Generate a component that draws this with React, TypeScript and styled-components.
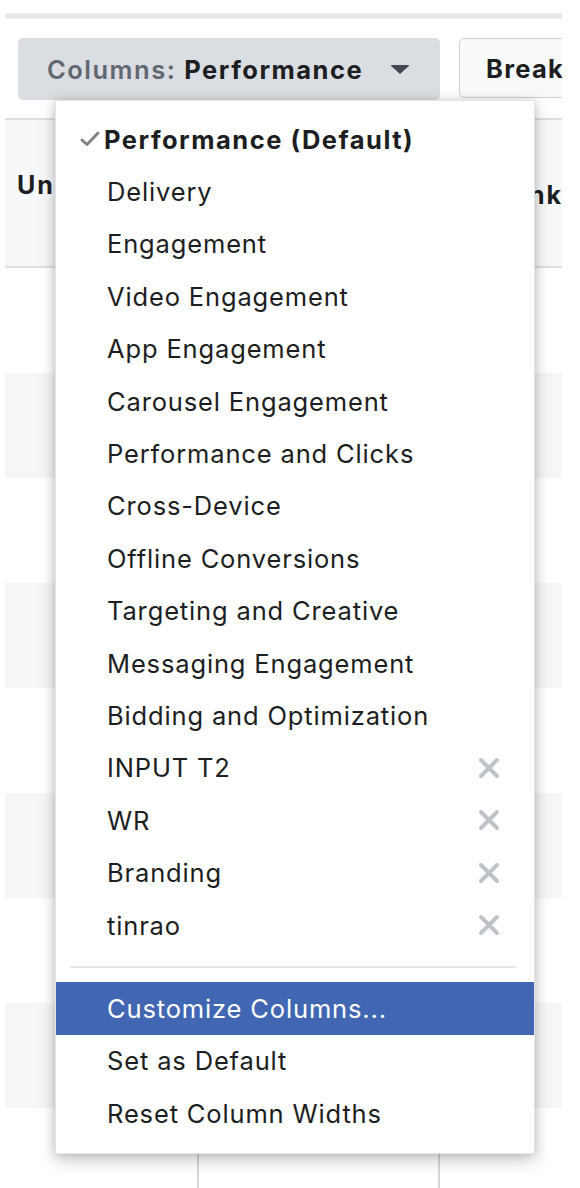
import styled, {createGlobalStyle} from "styled-components";

const GlobalStyle = createGlobalStyle`
  html, body {
    margin: 0;
    padding: 0;
    background: #ffffff;
  }
  body {
    font-family: Inter, "Open Sans", "Liberation Sans", sans-serif;
    color: #1c1e21;
    -webkit-font-smoothing: antialiased;
  }
`;

const Page = styled.div`
  position: relative;
  width: 580px;
  height: 1188px;
  overflow: hidden;
`;

const Viewport = styled.div`
  width: 562px;
  overflow: hidden;
`;

const TopRule = styled.div`
  margin: 13px 0 0 5px;
  height: 6px;
  background: linear-gradient(#eceef1, #e2e4e8 70%, #f4f5f7);
`;

const Toolbar = styled.div`
  display: flex;
  gap: 19px;
  margin-top: 19px;
  padding-left: 18px;
`;

const ColumnsButton = styled.div`
  display: flex;
  align-items: center;
  flex-shrink: 0;
  box-sizing: border-box;
  width: 422px;
  height: 62px;
  padding: 0 30px 0 29px;
  border-radius: 5px;
  background: #dadde1;
  font-size: 25.5px;
  letter-spacing: 1.5px;
`;

const Muted = styled.span`
  color: #606770;
  font-weight: 600;
  margin-right: 8px;
`;

const Strong = styled.span`
  color: #1c1e21;
  font-weight: 700;
`;

const Caret = styled.span`
  margin-left: auto;
  width: 0;
  height: 0;
  border-left: 10px solid transparent;
  border-right: 10px solid transparent;
  border-top: 9px solid #444950;
  border-radius: 2px;
`;

const BreakButton = styled.div`
  display: flex;
  align-items: center;
  flex-shrink: 0;
  box-sizing: border-box;
  height: 60px;
  width: 200px;
  padding-left: 26px;
  border: 1px solid #ccd0d5;
  border-radius: 5px;
  background: #f8f9fa;
  font-size: 25.5px;
  font-weight: 700;
  letter-spacing: 1.3px;
`;

const Table = styled.div`
  margin: 18px 0 0 5px;
`;

const HeaderRow = styled.div`
  display: grid;
  grid-template-columns: 192px 241px 1fr;
  height: 146px;
  border-top: 2px solid #dddfe2;
  border-bottom: 2px solid #dddfe2;
  background: #f7f8fa;
`;

const HeadCell = styled.div<{ $top: number; $left: number }>`
  padding: ${(p) => p.$top}px 0 0 ${(p) => p.$left}px;
  font-size: 25px;
  font-weight: 700;
  letter-spacing: 2px;
  white-space: nowrap;
  overflow: hidden;
`;

const BodyRow = styled.div<{ $striped: boolean; $ruled?: boolean }>`
  display: grid;
  grid-template-columns: 192px 241px 1fr;
  height: 105px;
  background: ${(p) => (p.$striped ? "#f5f6f7" : "#ffffff")};

  & > div + div {
    border-left: ${(p) => (p.$ruled ? "2px solid #d4d7db" : "none")};
  }
`;

const Cell = styled.div``;

const Menu = styled.div`
  position: absolute;
  left: 55px;
  top: 100px;
  width: 480px;
  box-sizing: border-box;
  padding: 12px 0 14px;
  background: #ffffff;
  border: 1px solid rgba(0, 0, 0, 0.1);
  box-shadow: 0 6px 16px rgba(0, 0, 0, 0.22), 0 0 8px rgba(0, 0, 0, 0.12);
  font-size: 25.5px;
  letter-spacing: 0.85px;
  color: #1c1e21;
`;

const Item = styled.div<{ $active?: boolean }>`
  display: flex;
  align-items: center;
  height: 52.4px;
  padding: 0 34px 0 51px;
  background: ${(p) => (p.$active ? "#4267b2" : "transparent")};
  color: ${(p) => (p.$active ? "#ffffff" : "#1c1e21")};
  white-space: nowrap;
`;

const CheckSlot = styled.span`
  display: inline-flex;
  width: 24px;
  margin-left: -27px;
`;

const CheckedLabel = styled.span`
  font-weight: 700;
  letter-spacing: 1.5px;
`;

const Remove = styled.span`
  margin-left: auto;
  display: inline-flex;
`;

const Separator = styled.div`
  height: 2px;
  margin: 15px 18px 14px 14px;
  background: #e4e6ea;
`;

const presets = [
  "Delivery",
  "Engagement",
  "Video Engagement",
  "App Engagement",
  "Carousel Engagement",
  "Performance and Clicks",
  "Cross-Device",
  "Offline Conversions",
  "Targeting and Creative",
  "Messaging Engagement",
  "Bidding and Optimization",
];

const saved = ["INPUT T2", "WR", "Branding", "tinrao"];

const Check = () => (
  <svg width="20" height="16" viewBox="0 0 20 16">
    <path d="M2 9 L7 13.5 L18 2" fill="none" stroke="#808285" strokeWidth="3" strokeLinecap="round" strokeLinejoin="round"/>
  </svg>
);

const Cross = () => (
  <svg width="22" height="22" viewBox="0 0 22 22">
    <path d="M3 3 L19 19 M19 3 L3 19" fill="none" stroke="#bec3c9" strokeWidth="4" strokeLinecap="round"/>
  </svg>
);

function App() {
    const rows = [false, true, false, true, false, true, false, true, false];

    return (
        <Page>
            <GlobalStyle/>
            <Viewport>
                <TopRule/>
                <Toolbar>
                    <ColumnsButton>
                        <Muted>Columns:</Muted>
                        <Strong>Performance</Strong>
                        <Caret/>
                    </ColumnsButton>
                    <BreakButton>Breakdown</BreakButton>
                </Toolbar>
                <Table>
                    <HeaderRow>
                        <HeadCell $top={50} $left={12}>Unique</HeadCell>
                        <HeadCell $top={60} $left={20}>Reach</HeadCell>
                        <HeadCell $top={60} $left={66}>Link Clicks</HeadCell>
                    </HeaderRow>
                    {rows.map((striped, i) => (
                        <BodyRow key={i} $striped={striped} $ruled={i === rows.length - 1}>
                            <Cell/>
                            <Cell/>
                            <Cell/>
                        </BodyRow>
                    ))}
                </Table>
            </Viewport>
            <Menu>
                <Item>
                    <CheckSlot><Check/></CheckSlot>
                    <CheckedLabel>Performance (Default)</CheckedLabel>
                </Item>
                {presets.map((name) => (
                    <Item key={name}>{name}</Item>
                ))}
                {saved.map((name) => (
                    <Item key={name}>
                        {name}
                        <Remove><Cross/></Remove>
                    </Item>
                ))}
                <Separator/>
                <Item $active>Customize Columns...</Item>
                <Item>Set as Default</Item>
                <Item>Reset Column Widths</Item>
            </Menu>
        </Page>
    );
}

export default App;
